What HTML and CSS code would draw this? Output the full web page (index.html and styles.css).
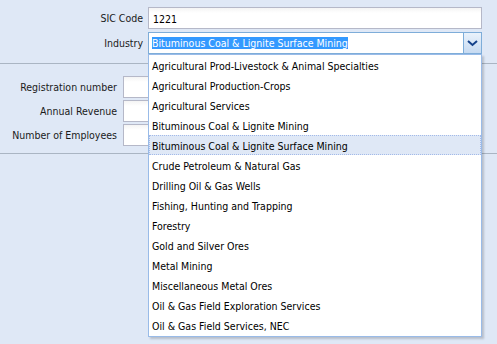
FILE: index.html
```html
<!DOCTYPE html>
<html lang="en">
    <head>
        <meta charset="utf-8">
        <title>Company details</title>
        <link rel="stylesheet" href="styles.css">
    </head>
    <body>
        <form class="company-form">
            <div class="top-rows">
                <label class="field-label" for="sic">SIC Code</label>
                <input class="text-field" id="sic" type="text" value="1221">

                <label class="field-label" for="industry">Industry</label>
                <div class="combo">
                    <div class="combo-input" id="industry"><span class="combo-selected">Bituminous Coal &amp; Lignite Surface Mining</span></div>
                    <div class="combo-trigger">
                        <svg width="11" height="7" viewBox="0 0 11 7"><path d="M1 1 L5.5 5 L10 1" fill="none" stroke="#15428b" stroke-width="2"/></svg>
                    </div>
                </div>
            </div>

            <div class="details-set">
                <div class="detail-rows">
                    <label class="field-label" for="reg">Registration number</label>
                    <input class="text-field small" id="reg" type="text">

                    <label class="field-label" for="revenue">Annual Revenue</label>
                    <input class="text-field small" id="revenue" type="text">

                    <label class="field-label" for="employees">Number of Employees</label>
                    <input class="text-field small" id="employees" type="text">
                </div>
            </div>

            <ul class="combo-list">
                <li>Agricultural Prod-Livestock &amp; Animal Specialties</li>
                <li>Agricultural Production-Crops</li>
                <li>Agricultural Services</li>
                <li>Bituminous Coal &amp; Lignite Mining</li>
                <li class="selected">Bituminous Coal &amp; Lignite Surface Mining</li>
                <li>Crude Petroleum &amp; Natural Gas</li>
                <li>Drilling Oil &amp; Gas Wells</li>
                <li>Fishing, Hunting and Trapping</li>
                <li>Forestry</li>
                <li>Gold and Silver Ores</li>
                <li>Metal Mining</li>
                <li>Miscellaneous Metal Ores</li>
                <li>Oil &amp; Gas Field Exploration Services</li>
                <li>Oil &amp; Gas Field Services, NEC</li>
            </ul>
        </form>
    </body>
</html>
```

FILE: styles.css
```css
html, body {
    margin:0;
    height:100%;
}

body {
    background-color:#dfe8f6;
    font-family:"DejaVu Sans Condensed", "DejaVu Sans", tahoma, sans-serif;
    font-size:10.5px;
    color:#1a1a1a;
}

.company-form {
    position:relative;
    height:100%;
    margin:0;
}

.top-rows {
    display:grid;
    grid-template-columns:143px 1fr;
    column-gap:5px;
    row-gap:3px;
    align-items:center;
    padding:7px 15px 0 0;
}

.field-label {
    text-align:right;
    white-space:nowrap;
}

.text-field {
    box-sizing:border-box;
    height:22px;
    margin:0;
    padding:1px 4px 0;
    border:1px solid #b5b8c8;
    background:#fff linear-gradient(#f4f4f4, #fff 5px);
    font-family:inherit;
    font-size:10.5px;
    color:#000;
    outline:none;
}

.text-field.small {
    width:160px;
}

.combo {
    display:flex;
    height:22px;
}

.combo-input {
    flex:1;
    box-sizing:border-box;
    height:22px;
    padding:4px 3px 0;
    border:1px solid #7eadd9;
    border-right:none;
    background:#fff;
    color:#000;
}

.combo-selected {
    background-color:#3399ff;
    color:#fff;
}

.combo-trigger {
    box-sizing:border-box;
    width:19px;
    height:22px;
    display:flex;
    align-items:center;
    justify-content:center;
    border:1px solid #7eadd9;
    background:linear-gradient(#eaf2fb, #c6daf1);
}

.details-set {
    margin-top:9px;
    border-top:1px solid #aab5c3;
    border-bottom:1px solid #aab5c3;
    padding:12px 0 7px;
}

.detail-rows {
    display:grid;
    grid-template-columns:117px auto;
    justify-content:start;
    column-gap:6px;
    row-gap:2px;
    align-items:center;
}

.combo-list {
    position:absolute;
    left:148px;
    top:54px;
    width:334px;
    box-sizing:border-box;
    margin:0;
    padding:0 0 1px;
    list-style:none;
    background:#fff;
    border:1px solid #99bbe8;
    box-shadow:2px 2px 2px rgba(0,0,0,0.18);
    color:#000;
}

.combo-list li {
    height:18px;
    line-height:18px;
    padding:2px 3px 0;
    white-space:nowrap;
}

.combo-list li.selected {
    background-color:#dfe8f6;
    outline:1px dotted #a3bae9;
    outline-offset:-1px;
}
```
